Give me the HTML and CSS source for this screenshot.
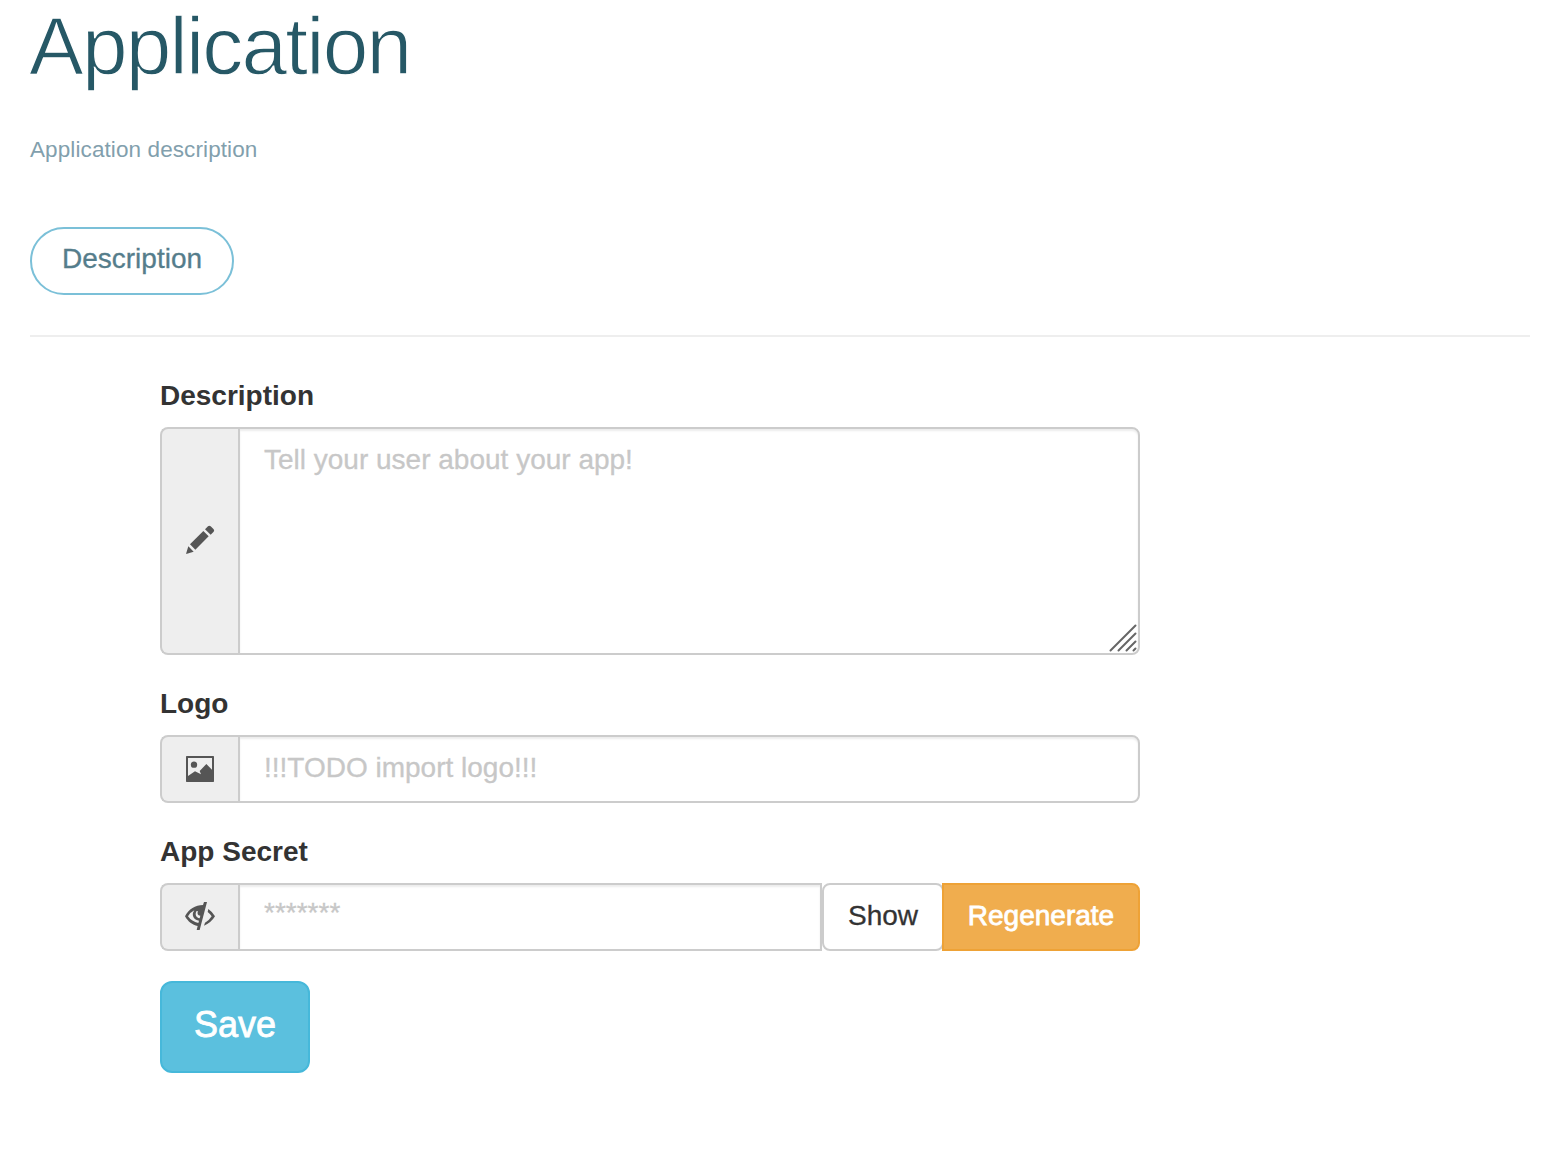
FILE: index.html
```html
<!DOCTYPE html>
<html lang="en">
<head>
<meta charset="utf-8">
<title>Application</title>
<link rel="stylesheet" href="styles.css">
</head>
<body>
<main class="page">
  <h1 class="title">Application</h1>
  <p class="lead">Application description</p>
  <nav class="tabs"><a class="tab">Description</a></nav>
  <hr class="divider">
  <form class="form">
    <div class="field">
      <label class="label" for="description">Description</label>
      <div class="group group-tall">
        <span class="addon">
          <svg width="30" height="30" viewBox="0 0 90 90" fill="#555"><path d="M3 87L10 64L26 80ZM15 58L55 18L71 34L31 74ZM60 13L69 4Q73 1 77 4L86 13Q89 17 86 20L77 29Z"/></svg>
        </span>
        <textarea class="control" id="description" placeholder="Tell your user about your app!"></textarea>
        <svg class="grip" width="28" height="28" viewBox="0 0 28 28" stroke="#666" stroke-width="2" stroke-linecap="round"><path d="M1.5 26.5L26.5 1.5M9.5 26.5L26.5 9.5M17.5 26.5L26.5 17.5M24.5 26.5L26.5 24.5"/></svg>
      </div>
    </div>
    <div class="field">
      <label class="label" for="logo">Logo</label>
      <div class="group">
        <span class="addon addon-picture">
          <svg width="28" height="26" viewBox="0 0 84 78"><path fill="#555" fill-rule="evenodd" d="M2 0H82Q84 0 84 2V76Q84 78 82 78H2Q0 78 0 76V2Q0 0 2 0ZM6 6V60L27 46L45 55L41 45L61 24L78 41V6Z"/><circle cx="24" cy="26" r="9.5" fill="#555"/></svg>
        </span>
        <input class="control" id="logo" type="text" placeholder="!!!TODO import logo!!!">
      </div>
    </div>
    <div class="field">
      <label class="label" for="secret">App Secret</label>
      <div class="group">
        <span class="addon">
          <svg width="30" height="28" viewBox="0 0 90 84" fill="#555"><path fill-rule="evenodd" d="M57 0H66L44 84H35L38 72C22 69 9 59 0 43C11 21 31 9 54 9ZM28 25Q14 32 9 43Q20 59 40 63L42 56C29 54 21 43 24 32ZM35 27C29 35 32 47 44 49L46 41C38 41 36 34 39 28Z"/><path d="M70 21Q82 29 90 43Q79 62 57 71L60 62Q73 55 80 43Q76 36 68 30Z"/></svg>
        </span>
        <input class="control secret" id="secret" type="text" placeholder="*******">
        <button class="btn btn-show" type="button">Show</button>
        <button class="btn btn-regenerate" type="button">Regenerate</button>
      </div>
    </div>
    <button class="btn btn-save" type="button">Save</button>
  </form>
</main>
</body>
</html>
```
FILE: styles.css
```css
* { box-sizing: border-box; }
body {
  margin: 0;
  background: #fff;
  color: #333;
  font: 28px/40px "Liberation Sans", Arial, sans-serif;
}
.page { padding: 0 30px; }
.title {
  margin: 0 0 0 -1px;
  height: 94px;
  font-size: 82px;
  line-height: 92px;
  font-weight: 400;
  letter-spacing: -1.8px;
  color: #265866;
  -webkit-text-stroke: 1.3px #fff;
}
.lead {
  margin: 40px 0 0;
  font-size: 22.5px;
  line-height: 32px;
  letter-spacing: 0.1px;
  color: #829fad;
}
.tabs { display: flex; margin-top: 61px; }
.tab {
  width: 204px;
  height: 68px;
  padding-top: 10px;
  border: 2px solid #7bc0d8;
  border-radius: 34px;
  text-align: center;
  color: #557d8b;
  -webkit-text-stroke: 0.3px #557d8b;
}
.divider {
  margin: 40px 0;
  border: 0;
  border-top: 2px solid #eee;
}
.form { width: 980px; margin-left: 130px; }
.field { margin-bottom: 30px; }
.label {
  display: block;
  height: 40px;
  margin-bottom: 10px;
  line-height: 38px;
  font-weight: 700;
}
.group { position: relative; display: flex; height: 68px; }
.group-tall { height: 228px; }
.addon {
  flex: none;
  display: flex;
  align-items: center;
  justify-content: center;
  width: 78px;
  padding-bottom: 2px;
  border: 2px solid #ccc;
  border-right: 0;
  border-radius: 8px 0 0 8px;
  background: #eee;
}
.addon-picture { padding-bottom: 0; }
.control {
  flex: 1;
  min-width: 0;
  margin: 0;
  padding: 11px 24px 13px;
  border: 2px solid #ccc;
  border-radius: 0 8px 8px 0;
  background: #fff;
  box-shadow: inset 0 2px 2px rgba(0, 0, 0, 0.075);
  font: inherit;
  color: #555;
  resize: none;
  outline: 0;
}
.control::placeholder {
  color: #c7c7c7;
  opacity: 1;
  -webkit-text-stroke: 0.3px #c7c7c7;
}
.secret {
  flex: 0 0 584px;
  padding: 8px 24px 16px;
  border-radius: 0;
}
.grip { position: absolute; right: 3px; bottom: 3px; }
.btn {
  margin: 0;
  padding: 0 0 2px;
  border: 2px solid;
  font: inherit;
}
.btn-show {
  width: 122px;
  border-color: #ccc;
  border-radius: 8px;
  background: #fff;
  color: #333;
  -webkit-text-stroke: 0.3px #333;
}
.btn-regenerate {
  width: 198px;
  margin-left: -2px;
  border-color: #eea236;
  border-radius: 0 8px 8px 0;
  background: #f0ad4e;
  color: #fff;
  -webkit-text-stroke: 0.8px #fff;
}
.btn-save {
  display: block;
  width: 150px;
  height: 92px;
  padding-bottom: 4px;
  border-color: #46b8da;
  border-radius: 12px;
  background: #5bc0de;
  color: #fff;
  font-size: 36px;
  -webkit-text-stroke: 0.8px #fff;
}
```
